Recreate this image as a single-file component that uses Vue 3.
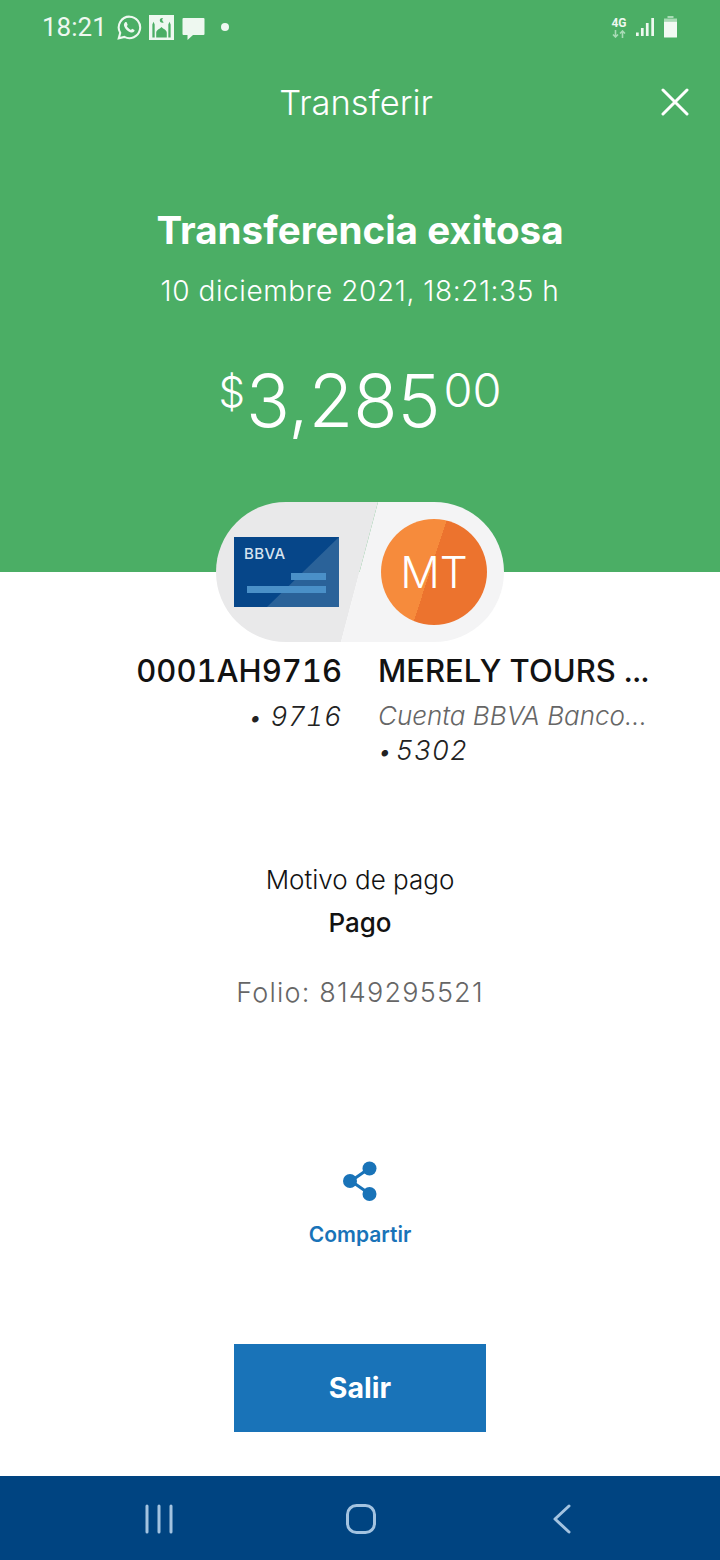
<template>
  <div class="screen">
    <section class="hero">
      <div class="status">
        <span class="clock">18:21</span>
        <svg class="st-wa" viewBox="0 0 24 24" width="25" height="25">
          <path d="M12 1.600a10.300 10.300 0 0 0-8.900 15.500L1.700 22.400l5.400-1.400A10.300 10.300 0 1 0 12 1.600z" fill="none" stroke="#eef8f0" stroke-width="2"/>
          <path d="M8.600 6.800c-.3 0-.8.100-1.200.6-.8.900-1 2.300-.3 3.800 1 2.200 3 4.300 5.500 5.300 1.600.6 3 .3 3.800-.7.400-.5.500-1.100.4-1.500l-2.300-1.200-1.100 1.200c-1.500-.5-3.300-2.200-4-3.700l.9-1.100-1-2.500z" fill="#eef8f0"/>
        </svg>
        <svg class="st-mosque" viewBox="0 0 26 26" width="25" height="25">
          <rect width="26" height="26" fill="#eef8f0"/>
          <path d="M3.500 23.500V10l1.200-3 1.200 3v13.500zM20.100 23.500V10l1.200-3 1.200 3v13.500zM7.500 23.500v-5c0-3 3.500-3.800 5.500-6 2 2.200 5.500 3 5.500 6v5z" fill="#4bae65"/>
          <path d="M14.500 3.200a2.500 2.500 0 1 0 .8 4.300 3 3 0 0 1-.8-4.300z" fill="#4bae65"/>
        </svg>
        <svg class="st-chat" viewBox="0 0 23 24" width="23" height="24">
          <path d="M1.500 1h20a1 1 0 0 1 1 1v15a1 1 0 0 1-1 1H11l-5.500 5v-5h-4a1 1 0 0 1-1-1V2a1 1 0 0 1 1-1z" fill="#eef8f0"/>
        </svg>
        <span class="st-dot"></span>
        <span class="st-right">
          <span class="net">
            <b>4G</b>
            <svg viewBox="0 0 16 8" width="16" height="8">
              <path d="M4.500 0v7M2 4.500 4.500 7 7 4.500M11.500 8V1M9 3.500 11.500 1 14 3.500" fill="none" stroke="#a9dbb6" stroke-width="1.600"/>
            </svg>
          </span>
          <svg viewBox="0 0 20 22" width="18" height="20">
            <path d="M0 17h3v4H0zM5.500 12h3v9h-3zM11 6.500h3V21h-3zM17 1h3v20h-3z" fill="#eef8f0"/>
          </svg>
          <svg class="batt" viewBox="0 0 15 22" width="15" height="22">
            <path d="M4.500 0h6v2h-6z" fill="#a9dbb6"/>
            <path d="M1 2.500h13v3H1z" fill="#a9dbb6"/>
            <path d="M1 5.500h13V21a.5.5 0 0 1-.5.5h-12A.5.5 0 0 1 1 21z" fill="#f2faf4"/>
          </svg>
        </span>
      </div>

      <div class="topbar">
        <span class="topbar-title">Transferir</span>
        <svg class="close" viewBox="0 0 28 28" width="28" height="28">
          <path d="M2 2l24 24M26 2 2 26" stroke="#fff" stroke-width="3" stroke-linecap="round"/>
        </svg>
      </div>

      <h1 class="headline">Transferencia exitosa</h1>
      <p class="date">10 diciembre 2021, 18:21:35 h</p>
      <p class="amount"><span class="cur">$</span>3,285<span class="cents">00</span></p>
    </section>

    <div class="pill">
      <svg class="pill-bg" viewBox="0 0 288 140" width="288" height="140">
        <path d="M162 0H70a70 70 0 0 0 0 140h55z" fill="#e9e9ea"/>
        <path d="M162 0h56a70 70 0 0 1 0 140h-93z" fill="#f4f4f5"/>
      </svg>
      <div class="card">
        <span class="card-logo">BBVA</span>
        <svg class="card-art" viewBox="0 0 105 70" width="105" height="70">
          <path d="M105 0v70H33z" fill="#2a6299"/>
          <path d="M57 36h35v7H57zM13 49h79v7H13z" fill="#4a90c8"/>
        </svg>
      </div>
      <div class="avatar">
        <span>MT</span>
      </div>
    </div>

    <div class="accounts">
      <div class="acc acc-from">
        <div class="acc-name">0001AH9716</div>
        <div class="acc-num"><small>•</small> 9716</div>
      </div>
      <div class="acc acc-to">
        <div class="acc-name">MERELY TOURS ...</div>
        <div class="acc-bank">Cuenta BBVA Banco...</div>
        <div class="acc-num"><small>•</small> 5302</div>
      </div>
    </div>

    <div class="reason">
      <div class="reason-label">Motivo de pago</div>
      <div class="reason-value">Pago</div>
      <div class="folio">Folio: 8149295521</div>
    </div>

    <div class="share">
      <svg viewBox="0 0 36 40" width="36" height="40">
        <path d="M27 7.500 9 20l18 12.500" fill="none" stroke="#1973b8" stroke-width="3"/>
        <circle cx="27.500" cy="7.500" r="7" fill="#1973b8"/>
        <circle cx="8" cy="20" r="7" fill="#1973b8"/>
        <circle cx="27.500" cy="33" r="7" fill="#1973b8"/>
      </svg>
      <span>Compartir</span>
    </div>

    <button class="exit">Salir</button>

    <nav class="navbar">
      <svg viewBox="0 0 30 30" width="30" height="30">
        <path d="M3 2v26M15 2v26M27 2v26" stroke="#a3c3e0" stroke-width="3" stroke-linecap="round"/>
      </svg>
      <svg viewBox="0 0 30 30" width="30" height="30">
        <rect x="1.500" y="1.500" width="27" height="27" rx="9" fill="none" stroke="#a3c3e0" stroke-width="3"/>
      </svg>
      <svg viewBox="0 0 30 30" width="30" height="30">
        <path d="M22 2 8 15l14 13" fill="none" stroke="#a3c3e0" stroke-width="3" stroke-linecap="round" stroke-linejoin="round"/>
      </svg>
    </nav>
  </div>
</template>

<script setup>
</script>

<style>
html, body { margin: 0; background: #fff; }
</style>

<style scoped>
.screen {
  width: 720px;
  height: 1560px;
  display: flex;
  flex-direction: column;
  overflow: hidden;
  background: #fff;
  font-family: Inter, "Liberation Sans", sans-serif;
  color: #121212;
}

/* green top */
.hero {
  height: 572px;
  flex: none;
  background: #4bae65;
  color: #fff;
  text-align: center;
}
.status {
  height: 54px;
  display: flex;
  align-items: center;
  padding: 0 42px 0 42px;
  color: #eef8f0;
}
.clock {
  font: 400 26px Roboto, sans-serif;
  margin-right: 10px;
}
.st-wa { margin-right: 7px; }
.st-mosque { margin-right: 8px; }
.st-chat { margin-top: 3px; }
.st-dot {
  width: 8px;
  height: 8px;
  border-radius: 50%;
  background: #eef8f0;
  margin-left: 16px;
}
.st-right {
  margin-left: auto;
  display: flex;
  align-items: center;
  gap: 9px;
}
.net {
  display: flex;
  flex-direction: column;
  align-items: center;
  width: 16px;
}
.net b {
  font: 700 12px/12px Roboto, sans-serif;
}
.net svg { margin-top: 1px; }

.topbar {
  height: 96px;
  padding-right: 8px;
  display: flex;
  align-items: center;
  justify-content: center;
  position: relative;
}
.topbar-title {
  font: 300 34.500px Inter, sans-serif;
}
.close {
  position: absolute;
  right: 31px;
  top: 34px;
}
.headline {
  margin: 57px 0 0;
  font: 700 38.600px/46px Inter, sans-serif;
}
.date {
  margin: 20px 0 0;
  font: 300 28px/36px Inter, sans-serif;
  letter-spacing: 0.6px;
}
.amount {
  margin: 50px 0 0;
  font: 300 72.500px/84px Inter, sans-serif;
}
.cur {
  font-size: 42px;
  vertical-align: 20px;
  line-height: 0;
  margin-right: 1px;
}
.cents {
  font-size: 47px;
  vertical-align: 20px;
  line-height: 0;
  margin-left: 3px;
}

/* account pill */
.pill {
  position: relative;
  width: 288px;
  height: 140px;
  flex: none;
  margin: -70px auto 0;
  display: flex;
  align-items: center;
  padding-left: 18px;
  box-sizing: border-box;
}
.pill-bg {
  position: absolute;
  left: 0;
  top: 0;
}
.card {
  position: relative;
  width: 105px;
  height: 70px;
  background: #064689;
  overflow: hidden;
}
.card-logo {
  position: absolute;
  left: 10px;
  top: 7px;
  color: #d7e4f0;
  font: 500 15px Inter, sans-serif;
  letter-spacing: 0.4px;
  z-index: 1;
}
.card-art {
  position: absolute;
  left: 0;
  top: 0;
}
.avatar {
  position: relative;
  width: 106px;
  height: 106px;
  margin-left: 42px;
  border-radius: 50%;
  background: linear-gradient(108deg, #f68b3c 0 47%, #ec732e 47%);
  display: flex;
  align-items: center;
  justify-content: center;
  color: #fff;
  font: 300 44px Inter, sans-serif;
}

/* account names */
.accounts {
  display: flex;
  margin-top: 9px;
  height: 126px;
}
.acc-from {
  width: 342px;
  flex: none;
  text-align: right;
}
.acc-to {
  margin-left: 36px;
}
.acc-name {
  font: 500 31px/40px Inter, sans-serif;
  font-variant-numeric: tabular-nums;
  white-space: nowrap;
}
.acc-num {
  font: italic 300 27px/33px Inter, sans-serif;
  font-variant-numeric: tabular-nums;
  letter-spacing: 0.5px;
  color: #222;
}
.acc-num small {
  font-size: 24px;
  line-height: 0;
}
.acc-from .acc-num { margin-top: 9px; }
.acc-to .acc-num {
  margin-top: 2px;
  word-spacing: -4px;
}
.acc-bank {
  margin-top: 8px;
  font: italic 300 26px/33px Inter, sans-serif;
  color: #666;
  white-space: nowrap;
}

/* reason */
.reason {
  margin-top: 85px;
  text-align: center;
}
.reason-label {
  font: 300 26px/36px Inter, sans-serif;
}
.reason-value {
  margin-top: 7px;
  font: 500 26px/36px Inter, sans-serif;
}
.folio {
  margin-top: 34px;
  font: 300 27px/36px Inter, sans-serif;
  letter-spacing: 1.200px;
  color: #666;
}

.share {
  margin-top: 150px;
  display: flex;
  flex-direction: column;
  align-items: center;
  color: #1973b8;
  font: 600 21px/28px Inter, sans-serif;
}
.share span { margin-top: 20px; }

.exit {
  display: block;
  width: 252px;
  height: 88px;
  margin: 95px auto 0;
  padding: 0 0 2px;
  border: none;
  background: #1973b8;
  color: #fff;
  font: 700 28.500px Inter, sans-serif;
}

.navbar {
  margin-top: auto;
  height: 84px;
  box-sizing: border-box;
  padding: 2px 143px 0 144px;
  background: #004481;
  display: flex;
  align-items: center;
  justify-content: space-between;
}
</style>
